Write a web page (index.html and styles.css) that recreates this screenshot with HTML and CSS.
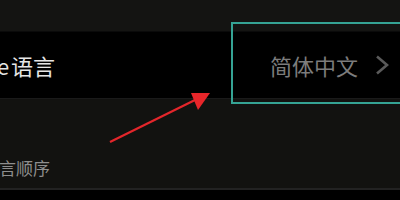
FILE: index.html
```html
<!DOCTYPE html>
<html lang="zh-CN">

<head>
  <meta charset="UTF-8">
  <title>语言设置</title>
  <link rel="stylesheet" href="styles.css">
</head>

<body>
  <div class="page">
    <div class="top"></div>
    <div class="row">
      <span class="label">e 语言</span>
      <span class="value">
        简体中文
        <svg class="chevron" width="14" height="20" viewBox="0 0 14 20">
          <polyline points="2,1.5 12,10 2,18.5" fill="none" stroke="#5a5a5a" stroke-width="2.6"/>
        </svg>
      </span>
    </div>
    <div class="section">
      <span class="hint">言顺序</span>
    </div>
    <div class="bottom"></div>

    <!-- annotation -->
    <div class="mark"></div>
    <svg class="arrow" width="400" height="200" viewBox="0 0 400 200">
      <line x1="110" y1="142" x2="197" y2="99" stroke="#e3262b" stroke-width="2.2"/>
      <polygon points="210,93 191,93 198,110" fill="#e8262a"/>
    </svg>
  </div>
</body>

</html>
```

FILE: styles.css
```css
* {
  box-sizing: border-box;
}

body {
  margin: 0;
  background: #000;
  font-family: "Noto Sans CJK SC", "Noto Sans", sans-serif;
}

.page {
  position: relative;
  width: 400px;
  height: 200px;
  overflow: hidden;
}

.top {
  height: 32px;
  background: #141412;
  border-bottom: 1px solid #0a0a0a;
}

.row {
  height: 67px;
  background: #000;
  border-bottom: 1px solid #1a1a1a;
  display: flex;
  align-items: center;
  justify-content: space-between;
}

.label {
  margin-left: -3px;
  font-size: 22px;
  word-spacing: -3px;
  color: #e6e6e6;
}

.value {
  display: flex;
  align-items: center;
  gap: 17px;
  margin-right: 11px;
  font-size: 22px;
  color: #7c7c7c;
}

.chevron {
  display: block;
}

.section {
  height: 89px;
  background: #121210;
  display: flex;
  align-items: flex-end;
  padding-bottom: 8px;
}

.hint {
  margin-left: -1px;
  font-size: 17px;
  color: #8e8e8e;
}

.bottom {
  height: 11px;
  background: #000;
  border-top: 2px solid #222;
}

.mark {
  position: absolute;
  left: 231px;
  top: 22px;
  width: 190px;
  height: 82px;
  border: 2px solid #35a394;
}

.arrow {
  position: absolute;
  left: 0;
  top: 0;
}
```
